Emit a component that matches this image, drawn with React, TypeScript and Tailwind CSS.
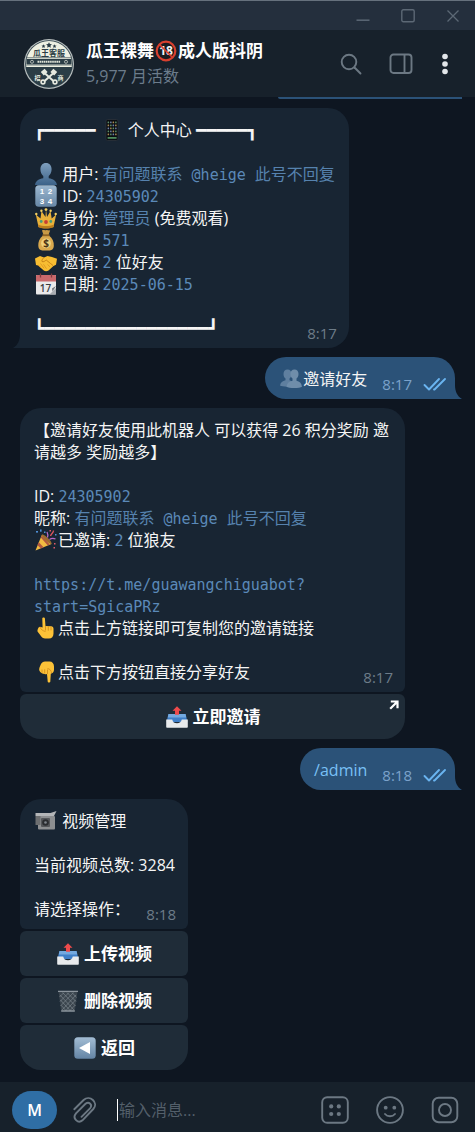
import type { ReactNode } from "react";

const emojiArt: Record<string, ReactNode> = {
  手机: (
    <>
      <rect x="5" y="0.5" width="12" height="21" rx="1.5" fill="#0a0d11" stroke="#2c343c" strokeWidth="0.8" />
      <g>
        {[2.6, 5.6, 8.6, 11.6, 14.6].map((y, r) =>
          [6.6, 9.1, 11.6, 14.1].map((x, c) => (
            <rect
              key={`${x}-${y}`}
              x={x}
              y={y}
              width="1.5"
              height="1.6"
              rx="0.3"
              fill={["#5d8f6a", "#a0564f", "#6d7fa8", "#8d8d8d", "#a88a52", "#5f6c78"][(r * 3 + c * 2 + r) % 6]}
            />
          )),
        )}
      </g>
      <rect x="6.600" y="18" width="9" height="1.800" fill="#4f8a5c" />
    </>
  ),
  用户: (
    <>
      <defs>
        <linearGradient id="bust" x1="0" y1="0" x2="0" y2="1">
          <stop offset="0" stopColor="#7f9fbe" />
          <stop offset="1" stopColor="#3c6288" />
        </linearGradient>
      </defs>
      <path
        d="M11 0C7.5 0 5.4 2.6 5.4 6.2c0 2.8 1.2 5.4 2.9 6.8v2.2C4 16 .6 17.600 0 22h22c-.6-4.400-4-6-8.300-6.800V13c1.700-1.400 2.900-4 2.900-6.800C16.600 2.600 14.500 0 11 0z"
        fill="url(#bust)"
      />
    </>
  ),
  数字: (
    <>
      <defs>
        <linearGradient id="num" x1="0" y1="0" x2="0" y2="1">
          <stop offset="0" stopColor="#9db8d0" />
          <stop offset="1" stopColor="#6787a6" />
        </linearGradient>
      </defs>
      <rect x="0.3" y="0.3" width="21.400" height="21.400" rx="3.500" fill="url(#num)" />
      <g fill="#fff" fontFamily="Liberation Sans, sans-serif" fontSize="8" fontWeight="700" textAnchor="middle">
        <text x="7" y="9">1</text>
        <text x="15" y="9">2</text>
        <text x="7" y="19">3</text>
        <text x="15" y="19">4</text>
      </g>
    </>
  ),
  王冠: (
    <>
      <path d="M3.500 20L.8 7.500l4.700 4L6.500 4l4 6L11 2l1 8 3.500-6 1.200 7.500 4.500-4L18.500 20c-4 1.800-11 1.800-15 0z" fill="#e9b13a" />
      <path d="M3 17.500c5 2 11 2 16 0l-.5 2.800c-4.500 1.700-10.500 1.700-15 0z" fill="#b97d1e" />
      <circle cx="1.300" cy="7" r="1.200" fill="#f4cf61" />
      <circle cx="6.400" cy="3.800" r="1.200" fill="#f4cf61" />
      <circle cx="11" cy="2.600" r="1.400" fill="#f4cf61" />
      <circle cx="15.600" cy="3.800" r="1.200" fill="#f4cf61" />
      <circle cx="20.700" cy="7" r="1.200" fill="#f4cf61" />
      <circle cx="11" cy="15" r="1.900" fill="#c83d33" />
      <circle cx="6.200" cy="14.500" r="1.400" fill="#4a9d7b" />
      <circle cx="15.800" cy="14.500" r="1.400" fill="#4a9d7b" />
    </>
  ),
  钱袋: (
    <>
      <path d="M7 1.500c1.500-1 2.500.2 4-.3 1.500-.5 2.500.6 4.200.1L13.500 6h-5z" fill="#c99a45" />
      <path d="M8 6.500C4.500 9 3 13 3.300 17c.3 3 1.500 4.200 4 4.500h7.500c2.500-.3 3.700-1.500 4-4.500.3-4-1.300-8-4.800-10.500z" fill="#d9a94e" />
      <path d="M7.500 5.300h7v1.900h-7z" fill="#8f6424" />
      <circle cx="11" cy="14.300" r="4.900" fill="#efd07c" />
      <text x="11" y="18" textAnchor="middle" fontFamily="Open Sans, sans-serif" fontWeight="700" fontSize="10" fill="#4c3414">
        $
      </text>
    </>
  ),
  握手: (
    <>
      <path d="M0 7.500L5 5l4 1.500 3.500-1.500L17 6l5 1.800-1 6-2.500 1.200-5 4.500c-1.500 1-3.500 1-5-.2L3 14.500l-2-.5z" fill="#f7bd32" />
      <path d="M9 6.500c-1.500 1.500-2.500 3-2 4 1.500.8 3-.5 4.200-1.500l6.800 5.500" fill="none" stroke="#c98416" strokeWidth="1" strokeLinejoin="round" />
      <path d="M3 14l3 2.500m-.5-4l3.500 4.800m-.5-4l3 4.500m3.500-2l-2.500-2.300m5 .8l-2.800-2.500" stroke="#d9921c" strokeWidth="0.8" fill="none" />
    </>
  ),
  日历: (
    <>
      <rect x="1" y="2" width="20" height="19.500" rx="1" fill="#e9e9ea" />
      <path d="M1 3a1 1 0 011-1h18a1 1 0 011 1v5.500H1z" fill="#c9686b" />
      <path d="M5.500.5v4M16.500.5v4" stroke="#7e3c40" strokeWidth="1.300" />
      <text x="10.500" y="18.500" textAnchor="middle" fontFamily="Open Sans, sans-serif" fontWeight="600" fontSize="10" fill="#3a3d42">
        17
      </text>
      <path d="M21 15v6.500h-6.500z" fill="#a9adb2" />
      <path d="M21 13l-4 2.500 .5 3z" fill="#6f757b" />
    </>
  ),
  双人: (
    <g fill="#5f7f9f">
      <path d="M7.500 1.500c-2.600 0-4 2-4 4.500 0 2 .8 3.600 2 4.500v1.700C2.500 13 .5 14.500 0 17.500c2 1.500 12 1.500 14 0-.4-3-2-4.600-4.500-5.300v-1.700c1.200-.9 2-2.500 2-4.500 0-2.500-1.400-4.500-4-4.500z" />
      <path d="M14.500 1.500c-2.600 0-4 2-4 4.500 0 2 .8 3.600 2 4.500v2.200c-3.300.6-5.500 2.300-6 6 2 1.700 13.500 1.700 15.500 0-.5-3.700-2.500-5.400-5.500-6v-2.200c1.200-.9 2-2.500 2-4.500 0-2.500-1.400-4.500-4-4.500z" fill="#6f8daa" />
    </g>
  ),
  庆祝: (
    <>
      <path d="M.5 21.500L7 5.500l9.500 9.500z" fill="#f2bb42" />
      <path d="M3.800 13.200l4.800 5.100-2.800 1.200-3.400-3.500zM5.800 8.500l7 7.900 2-.8-8-9z" fill="#b1583f" />
      <path d="M7 5.500c2.500-.8 10.500 7 9.500 9.500-2 .8-10.300-7.300-9.500-9.500z" fill="#9c6a30" />
      <path d="M12.500 8.500c1-2 .2-4-.5-5.500M14.500 10.500c2-1.500 4-1.500 6-.5" stroke="#b86ac9" strokeWidth="1.300" fill="none" />
      <path d="M15.500 7c.5-2.500 3-2.800 3-5.500" stroke="#e0555f" strokeWidth="1.300" fill="none" />
      <g fill="#4f8fd6">
        <rect x="1" y="2" width="2" height="1.600" />
        <rect x="5" y="0.500" width="1.600" height="2.200" />
        <rect x="20" y="5" width="1.500" height="1.500" />
        <rect x="9" y="2.500" width="1.500" height="1.500" />
      </g>
      <g fill="#de5a6b">
        <rect x="14.500" y="1" width="1.500" height="1.500" />
        <rect x="19" y="14" width="1.500" height="1.500" />
        <rect x="18.500" y="18" width="1.500" height="1.500" />
      </g>
    </>
  ),
  上指: (
    <>
      <path d="M7.300 1.600C7.300.2 9.800.2 9.900 1.600l.6 7.400 5.500.2c1.700.1 2.500 1 2.500 2.600v4.700c0 3-1.700 5-4.500 5H10c-1.500 0-2.500-.5-3.500-1.700l-3.800-5C1.900 13.500 3.500 9.500 5 9.700l2.600.8z" fill="#fcc238" />
      <path d="M10.500 9v4.500m2.800-4.300v4.500m2.700-4.300v4M5 10c.8 2.500 3 4 5.500 4.500" stroke="#d58f1e" strokeWidth="0.900" fill="none" />
    </>
  ),
  下指: (
    <>
      <path d="M12.700 20.400c0 1.400 2.500 1.400 2.600 0l.5-7.600c1.700-.5 3.200-1.800 3.200-4V5.500c0-3-1.700-5-4.500-5H10C8 .5 7 1.500 6 3L4.500 6.500c-1 2.500.2 4.500 2 5.500 1.500 1 3.500 1.500 5.500 1z" fill="#fcc238" />
      <path d="M12.500 13V8.500M9.700 12.500V8.300M7 11.700V8.500M16.500 12c-.2-2.500-1.500-4-4-4.500" stroke="#d58f1e" strokeWidth="0.900" fill="none" />
    </>
  ),
  发件: (
    <>
      <path d="M2.500 8h17l2 8H.5z" fill="#3f7fc8" />
      <path d="M2.500 8h17l.8 3.500H1.700z" fill="#74a9df" />
      <path d="M.2 13.500h6c.8 2.800 2 3.700 4.800 3.700s4-1 4.800-3.700h6V21a.8.800 0 01-.8.800H1a.8.800 0 01-.8-.8z" fill="#e8eaec" />
      <path d="M11 .3l4.500 4.500H13v4H9v-4H6.500z" fill="#ee4b4c" />
    </>
  ),
  摄像: (
    <>
      <rect x="3" y="6" width="17" height="13.500" rx="1" fill="#8d8f91" />
      <path d="M.5 3h15l6-2-2.500 5H.5z" fill="#b4b6b8" />
      <rect x="0.500" y="6" width="5" height="9" fill="#6c6e70" />
      <rect x="6" y="8" width="9" height="9" rx="1" fill="#55575a" />
      <circle cx="10.500" cy="12.500" r="3.300" fill="#2b2d30" />
      <circle cx="10.500" cy="12.500" r="1.300" fill="#80868c" />
    </>
  ),
  垃圾桶: (
    <>
      <path d="M1.500 1.500h19L17.800 21H4.200z" fill="#3b454e" />
      <path
        d="M3 5l14 15M5.500 2.500l13 13.500M10 2.500l9 9M15 2.500l4.500 5M3.500 10l10 11M4.300 15.500l5 5.500M19 5L5 20M16.500 2.500l-13 13.500M12 2.500l-9 9M7 2.500L2.500 7M18.500 10L8.500 21M17.800 15.500L12.500 21"
        stroke="#858e96"
        strokeWidth="0.600"
      />
      <path d="M1 1.300h20M4.200 21h13.600" stroke="#8b949c" strokeWidth="1.300" />
    </>
  ),
  返回: (
    <>
      <defs>
        <linearGradient id="back" x1="0" y1="0" x2="0" y2="1">
          <stop offset="0" stopColor="#a3bdd4" />
          <stop offset="1" stopColor="#6485a5" />
        </linearGradient>
      </defs>
      <rect x="0.300" y="0.300" width="21.400" height="21.400" rx="3.500" fill="url(#back)" />
      <path d="M16 5v12L5 11z" fill="#fff" />
    </>
  ),
};

function Emoji({ name }: { name: string }) {
  return (
    <svg viewBox="0 0 22 22" className="mx-px inline-block h-[22px] w-[22px] shrink-0 align-top" aria-hidden="true">
      {emojiArt[name]}
    </svg>
  );
}

function Line({ children }: { children?: ReactNode }) {
  return <div className="h-[22px] whitespace-pre leading-[22px]">{children}</div>;
}

function Code({ children }: { children: ReactNode }) {
  return (
    <code className="font-['DejaVu_Sans_Mono','Noto_Sans_CJK_SC',monospace] text-[15px] leading-none text-[#5b89b8]">{children}</code>
  );
}

function CodeCjk({ children }: { children: ReactNode }) {
  return <span className="text-[#5682ae]">{children}</span>;
}

function Box({ children }: { children: ReactNode }) {
  return <span className="font-['DejaVu_Sans_Mono',monospace] text-[17px] leading-none">{children}</span>;
}

function Time({ children }: { children: ReactNode }) {
  return <time className="absolute right-3 bottom-1 text-[15px] leading-[22px] text-[#6d7c89]">{children}</time>;
}

function Sent({ children, time }: { children: ReactNode; time: string }) {
  return (
    <div className="relative mr-5 flex w-fit items-start self-end rounded-t-[21px] rounded-bl-[21px] bg-[#2b5278] px-[14px] pt-[11px] pb-1">
      <Line>{children}</Line>
      <time className="mt-[5px] ml-[15px] text-[15px] leading-[22px] text-[#7ba2cb]">{time}</time>
      <svg viewBox="0 0 24 14" className="mt-[9px] -mr-[6px] ml-[11px] h-[14px] w-6" fill="none" stroke="#6ab4f0" strokeWidth="1.900" strokeLinecap="round" strokeLinejoin="round" aria-label="已读">
        <path d="M1.500 8l4.500 4.500L16 2M11 12.500l.5 0L22 2" />
      </svg>
      <svg viewBox="0 0 8 14" className="absolute -right-[7px] bottom-0 h-[14px] w-2" fill="#2b5278" aria-hidden="true">
        <path d="M0 0h1c0 6 2 11 7 14H0z" />
      </svg>
    </div>
  );
}

function KeyboardButton({ icon, children, last, external }: { icon: string; children: ReactNode; last?: boolean; external?: boolean }) {
  return (
    <button
      type="button"
      className={`relative mt-[2px] flex h-[45px] w-full items-center justify-center gap-1 bg-[#1f2c38] text-[17px] font-bold leading-[22px] text-white ${
        last ? "rounded-t-md rounded-b-[21px]" : "rounded-md"
      }`}
    >
      <Emoji name={icon} />
      <span>{children}</span>
      {external && (
        <svg viewBox="0 0 10 10" className="absolute top-[6px] right-[6px] h-[10px] w-[10px]" fill="none" stroke="#fff" strokeWidth="2.200" aria-hidden="true">
          <path d="M1.800 1.500h6.700v6.700M8.500 1.500L1.200 8.800" />
        </svg>
      )}
    </button>
  );
}

function Avatar() {
  return (
    <svg viewBox="0 0 50 50" className="h-[50px] w-[50px] shrink-0" role="img" aria-label="瓜王客服">
      <defs>
        <clipPath id="disc">
          <circle cx="25" cy="25" r="23" />
        </clipPath>
      </defs>
      <circle cx="25" cy="25" r="25" fill="#b6bdbd" />
      <circle cx="25" cy="25" r="23.800" fill="#2b3d46" />
      <g clipPath="url(#disc)">
        <path d="M0 0h50v18.500H0zM0 26.500h50v1.500H0z" fill="#eef0e2" />
        <path d="M2 19.500h46v6.500H2z" fill="#2b3d46" stroke="#dfe3d8" strokeWidth="0.900" />
      </g>
      <path d="M25 3.200l.9 1.900 2 .2-1.500 1.400.4 2.100-1.800-1-1.800 1 .4-2.100-1.500-1.400 2-.2zM19.500 5.200l.6 1.300 1.400.1-1 1 .2 1.400-1.200-.7-1.200.7.2-1.400-1-1 1.400-.1zM30.500 5.200l.6 1.300 1.400.1-1 1 .2 1.400-1.200-.7-1.200.7.200-1.400-1-1 1.400-.1z" fill="#2b3d46" />
      <text x="25" y="17" textAnchor="middle" fontFamily="Noto Sans CJK SC, sans-serif" fontWeight="700" fontSize="8" fill="#2b3d46">
        瓜王客服
      </text>
      <circle cx="8" cy="22.800" r="1.500" fill="none" stroke="#dfe3d8" strokeWidth="0.700" />
      <circle cx="42" cy="22.800" r="1.500" fill="none" stroke="#dfe3d8" strokeWidth="0.700" />
      <path d="M13.500 22.800h23" stroke="#dfe3d8" strokeWidth="2" strokeDasharray="1.600 0.500" />
      <g stroke="#e6e9df" fill="none">
        <path d="M20.500 34l9.500 8.500M29.500 34L20 42.500" strokeWidth="2" />
        <path d="M18.300 34.800l3.800-3.400M31.700 34.800l-3.800-3.400" strokeWidth="4.500" />
        <circle cx="19" cy="43" r="1.900" strokeWidth="1.600" />
        <circle cx="31" cy="43" r="1.900" strokeWidth="1.600" />
      </g>
      <g fill="#e6e9df" fontFamily="Noto Sans CJK SC, sans-serif" fontWeight="700" fontSize="6" textAnchor="middle">
        <text x="13.500" y="41">招</text>
        <text x="36.500" y="41">商</text>
      </g>
    </svg>
  );
}

function Adult() {
  return (
    <svg viewBox="0 0 22 22" className="mx-px h-[22px] w-[22px] shrink-0" role="img" aria-label="18">
      <circle cx="11" cy="11" r="9" fill="#191c20" />
      <text x="11" y="15.300" textAnchor="middle" fontFamily="Open Sans, sans-serif" fontWeight="700" fontSize="12" fill="#f4f4f4">
        18
      </text>
      <circle cx="11" cy="11" r="9.300" fill="none" stroke="#d8402f" strokeWidth="2.200" />
      <path d="M4.500 4.500l13 13" stroke="#d8402f" strokeWidth="1.700" />
    </svg>
  );
}

export default function App() {
  return (
    <div className="flex min-h-screen flex-col bg-[#0e1621] font-['Open_Sans','Noto_Sans_CJK_SC',sans-serif] text-base text-[#f5f5f5]">
      <div className="flex h-[30px] items-center justify-end gap-[31px] border-t border-[#66717d] bg-[#242f3d] pr-[15px] text-[#5c6875]">
        <button type="button" aria-label="最小化">
          <svg viewBox="0 0 14 14" className="h-[14px] w-[14px]" stroke="currentColor" strokeWidth="1.500">
            <path d="M0.500 11.200h13" />
          </svg>
        </button>
        <button type="button" aria-label="最大化">
          <svg viewBox="0 0 14 14" className="h-[14px] w-[14px]" fill="none" stroke="currentColor" strokeWidth="1.400">
            <rect x="0.800" y="0.800" width="12.400" height="12" rx="1.500" />
          </svg>
        </button>
        <button type="button" aria-label="关闭">
          <svg viewBox="0 0 14 14" className="h-[14px] w-[14px]" stroke="currentColor" strokeWidth="1.300">
            <path d="M1.500 1.500l11 11M12.500 1.500l-11 11" />
          </svg>
        </button>
      </div>

      <header className="flex h-[67px] items-center gap-3 bg-[#17212b] pr-[20px] pl-6">
        <Avatar />
        <div className="min-w-0 flex-1">
          <h1 className="flex h-[25px] items-center whitespace-nowrap text-[17px] font-bold leading-6 text-white">
            瓜王裸舞
            <Adult />
            成人版抖阴
          </h1>
          <p className="text-base leading-[25px] text-[#6c7c8b]">5,977 月活数</p>
        </div>
        <div className="flex items-center text-[#6c7883]">
          <button type="button" aria-label="搜索">
            <svg viewBox="0 0 22 22" className="h-[22px] w-[22px]" fill="none" stroke="currentColor" strokeWidth="1.900" strokeLinecap="round">
              <circle cx="9" cy="9" r="7.300" />
              <path d="M14.500 14.500l6 6" />
            </svg>
          </button>
          <button type="button" aria-label="侧栏" className="ml-[27px]">
            <svg viewBox="0 0 24 22" className="h-[22px] w-6" fill="none" stroke="currentColor" strokeWidth="1.900">
              <rect x="1.500" y="1.500" width="21" height="18.500" rx="3" />
              <path d="M15.500 1.500V20" />
            </svg>
          </button>
          <button type="button" aria-label="更多" className="ml-[22px]">
            <svg viewBox="0 0 20 22" className="h-[22px] w-5" fill="#e3e7ea">
              <circle cx="10" cy="3.500" r="2.800" />
              <circle cx="10" cy="11" r="2.800" />
              <circle cx="10" cy="18.500" r="2.800" />
            </svg>
          </button>
        </div>
      </header>

      <main className="flex flex-1 flex-col gap-[9px] pb-3">
        <div className="mr-[13px] h-[2px] w-[184px] self-end rounded-bl-full bg-[#2b5278]" />

        <article className="relative ml-5 w-fit rounded-t-[21px] rounded-br-[21px] bg-[#182533] px-[14px] pt-[11px] pb-[9px]">
          <Line>
            <Box>┏━━━━━</Box> <Emoji name="手机" /> 个人中心 <Box>━━━━━┓</Box>
          </Line>
          <Line />
          <Line>
            <Emoji name="用户" /> 用户: <CodeCjk>有问题联系</CodeCjk>
            <Code> @heige </Code>
            <CodeCjk>此号不回复</CodeCjk>
          </Line>
          <Line>
            <Emoji name="数字" /> ID: <Code>24305902</Code>
          </Line>
          <Line>
            <Emoji name="王冠" /> 身份: <CodeCjk>管理员</CodeCjk> (免费观看)
          </Line>
          <Line>
            <Emoji name="钱袋" /> 积分: <Code>571</Code>
          </Line>
          <Line>
            <Emoji name="握手" /> 邀请: <Code>2</Code> 位好友
          </Line>
          <Line>
            <Emoji name="日历" /> 日期: <Code>2025-06-15</Code>
          </Line>
          <Line />
          <Line>
            <Box>┗━━━━━━━━━━━━━━━━┛</Box>
          </Line>
          <Time>8:17</Time>
          <svg viewBox="0 0 8 14" className="absolute bottom-0 -left-[7px] h-[14px] w-2" fill="#182533" aria-hidden="true">
            <path d="M8 0H7c0 6-2 11-7 14h8z" />
          </svg>
        </article>

        <Sent time="8:17">
          <Emoji name="双人" />
          邀请好友
        </Sent>

        <div className="ml-5 w-[385px] max-w-full">
          <article className="relative rounded-t-[21px] rounded-b-md bg-[#182533] px-[14px] pt-[11px] pb-[9px]">
            <Line>【邀请好友使用此机器人 可以获得 26 积分奖励 邀</Line>
            <Line>请越多 奖励越多】</Line>
            <Line />
            <Line>
              ID: <Code>24305902</Code>
            </Line>
            <Line>
              昵称: <CodeCjk>有问题联系</CodeCjk>
              <Code> @heige </Code>
              <CodeCjk>此号不回复</CodeCjk>
            </Line>
            <Line>
              <Emoji name="庆祝" />
              已邀请: <Code>2</Code> 位狼友
            </Line>
            <Line />
            <a href="#invite" className="block">
              <Line>
                <Code>https://t.me/guawangchiguabot?</Code>
              </Line>
              <Line>
                <Code>start=SgicaPRz</Code>
              </Line>
            </a>
            <Line>
              <Emoji name="上指" />
              点击上方链接即可复制您的邀请链接
            </Line>
            <Line />
            <Line>
              <Emoji name="下指" />
              点击下方按钮直接分享好友
            </Line>
            <Time>8:17</Time>
          </article>
          <KeyboardButton icon="发件" last external>
            立即邀请
          </KeyboardButton>
        </div>

        <Sent time="8:18">
          <a href="#admin" className="text-[#79c0f5]">
            /admin
          </a>
        </Sent>

        <div className="ml-5 w-[168px]">
          <article className="relative rounded-t-[21px] rounded-b-md bg-[#182533] px-[14px] pt-[11px] pb-[9px]">
            <Line>
              <Emoji name="摄像" /> 视频管理
            </Line>
            <Line />
            <Line>当前视频总数: 3284</Line>
            <Line />
            <Line>请选择操作：</Line>
            <Time>8:18</Time>
          </article>
          <KeyboardButton icon="发件">上传视频</KeyboardButton>
          <KeyboardButton icon="垃圾桶">删除视频</KeyboardButton>
          <KeyboardButton icon="返回" last>
            返回
          </KeyboardButton>
        </div>
      </main>

      <footer className="flex h-[50px] items-center bg-[#17212b] pt-[6px] pr-4 pl-3 text-[#6c7883]">
        <button type="button" className="h-[38px] w-[45px] shrink-0 rounded-[19px] bg-[#2f6ea5] text-base font-semibold text-white">
          M
        </button>
        <button type="button" aria-label="附件" className="ml-[14px] shrink-0">
          <svg viewBox="0 0 28 28" className="h-7 w-7" fill="none" stroke="currentColor" strokeWidth="1.900" strokeLinecap="round">
            <path d="M3.300 13.200L12.600 4C18.700-1.700 28 6.500 22.300 13L11.500 24.300C7.200 28 .8 22.500 5 17.300L14.500 7.800C18 5 22 9 19 12.300L10.500 20.800" />
          </svg>
        </button>
        <div className="ml-[18px] flex min-w-0 flex-1 items-center">
          <span className="h-[22px] w-px shrink-0 bg-white" />
          <input
            type="text"
            aria-label="消息"
            placeholder="输入消息..."
            className="ml-px w-full min-w-0 bg-transparent text-base leading-[22px] text-white outline-none placeholder:text-[#535f6a]"
          />
        </div>
        <div className="flex shrink-0 items-center gap-[27px]">
          <button type="button" aria-label="命令">
            <svg viewBox="0 0 28 28" className="h-7 w-7" fill="none" stroke="currentColor" strokeWidth="1.900">
              <rect x="1.200" y="1.200" width="25.600" height="25.600" rx="5" />
              <g fill="currentColor" stroke="none">
                <circle cx="10.200" cy="10.400" r="2.100" />
                <circle cx="17.800" cy="10.400" r="2.100" />
                <circle cx="10.200" cy="18" r="2.100" />
                <circle cx="17.800" cy="18" r="2.100" />
              </g>
            </svg>
          </button>
          <button type="button" aria-label="表情">
            <svg viewBox="0 0 28 28" className="h-7 w-7" fill="none" stroke="currentColor" strokeWidth="1.900" strokeLinecap="round">
              <circle cx="14" cy="14" r="12.900" />
              <path d="M9 18c2.500 3 7.500 3 10 0" />
              <circle cx="9.700" cy="11.700" r="1.900" fill="currentColor" stroke="none" />
              <circle cx="18.300" cy="11.700" r="1.900" fill="currentColor" stroke="none" />
            </svg>
          </button>
          <button type="button" aria-label="视频消息">
            <svg viewBox="0 0 28 28" className="h-7 w-7" fill="none" stroke="currentColor" strokeWidth="1.900">
              <rect x="1.700" y="1.700" width="24.600" height="24.600" rx="6" />
              <circle cx="14" cy="14" r="6" />
            </svg>
          </button>
        </div>
      </footer>
    </div>
  );
}
